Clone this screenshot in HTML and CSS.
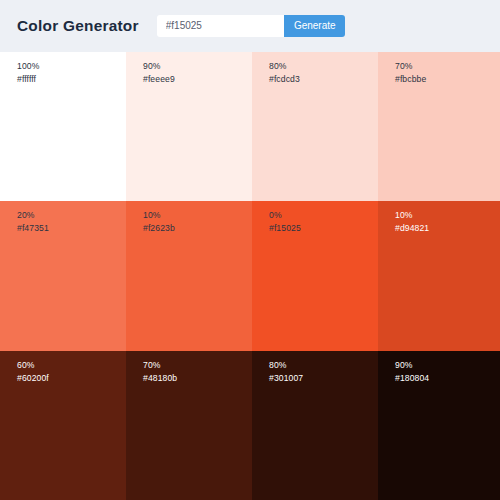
FILE: index.html
```html
<!DOCTYPE html>
<html>
<head>
<meta charset="utf-8">
<link rel="stylesheet" href="styles.css">
</head>
<body>
<header class="header">
  <h1 class="title">Color Generator</h1>
  <form class="form">
    <input class="input" type="text" value="#f15025">
    <button class="btn" type="button">Generate</button>
  </form>
</header>
<main class="grid">
  <div class="cell light" style="background:#ffffff"><p>100%</p><p>#ffffff</p></div>
  <div class="cell light" style="background:#feeee9"><p>90%</p><p>#feeee9</p></div>
  <div class="cell light" style="background:#fcdcd3"><p>80%</p><p>#fcdcd3</p></div>
  <div class="cell light" style="background:#fbcbbe"><p>70%</p><p>#fbcbbe</p></div>
  <div class="cell light" style="background:#f47351"><p>20%</p><p>#f47351</p></div>
  <div class="cell light" style="background:#f2623b"><p>10%</p><p>#f2623b</p></div>
  <div class="cell light" style="background:#f15025"><p>0%</p><p>#f15025</p></div>
  <div class="cell dark" style="background:#d94821"><p>10%</p><p>#d94821</p></div>
  <div class="cell dark" style="background:#60200f"><p>60%</p><p>#60200f</p></div>
  <div class="cell dark" style="background:#48180b"><p>70%</p><p>#48180b</p></div>
  <div class="cell dark" style="background:#301007"><p>80%</p><p>#301007</p></div>
  <div class="cell dark" style="background:#180804"><p>90%</p><p>#180804</p></div>
</main>
</body>
</html>
```
FILE: styles.css
```css
* { box-sizing: border-box; }
html, body { margin: 0; padding: 0; height: 100%; }
body {
  font-family: "Liberation Sans", Arial, sans-serif;
  display: flex;
  flex-direction: column;
  overflow: hidden;
}
.header {
  height: 52px;
  flex: none;
  background: #edf0f5;
  display: flex;
  align-items: center;
  padding: 0 17px;
}
.title {
  margin: 0;
  font-size: 15.4px;
  font-weight: 700;
  letter-spacing: 0.25px;
  color: #1c2b3f;
}
.form {
  display: flex;
  margin-left: 18.5px;
  margin-top: -1px;
}
.input {
  width: 127px;
  height: 22px;
  border: none;
  border-radius: 3px 0 0 3px;
  background: #fff;
  padding: 0 8.5px;
  font-family: inherit;
  font-size: 10px;
  color: #5a6070;
  outline: none;
}
.btn {
  width: 61px;
  height: 22px;
  border: none;
  border-radius: 0 3px 3px 0;
  background: #4299e1;
  color: #fff;
  font-family: inherit;
  font-size: 10px;
  padding: 0;
}
.grid {
  flex: 1;
  display: grid;
  grid-template-columns: 126px 126px 126px 1fr;
  grid-template-rows: repeat(3, 1fr);
}
.cell {
  padding: 8px 17px;
  font-size: 8.6px;
  letter-spacing: 0.1px;
  line-height: 13px;
}
.cell p { margin: 0; }
.light { color: #2d3442; }
.dark { color: #fff; }
```
